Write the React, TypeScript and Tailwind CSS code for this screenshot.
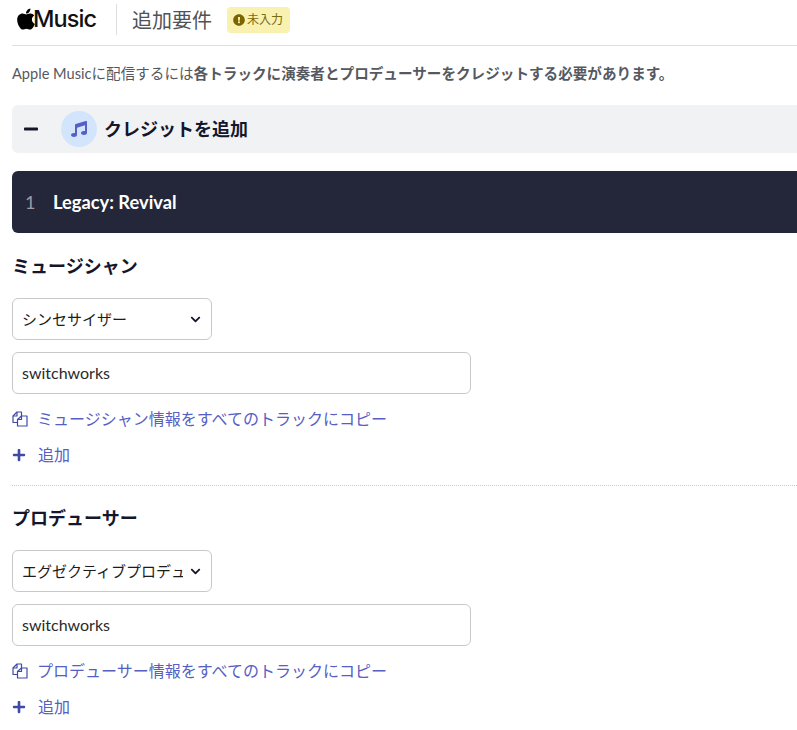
import React from "react";
import { FaApple, FaChevronDown, FaExclamationCircle, FaMinus, FaMusic, FaPlus } from "react-icons/fa";

const CopyIcon = () => (
  <svg width="16" height="16" viewBox="0 0 16 16" fill="none" stroke="#3f4aa8" strokeWidth="1.2" strokeLinejoin="round" className="shrink-0">
    <path d="M5.5 11.5H1V5L5 1H9.5V5" />
    <path d="M5 1V5H1" />
    <path d="M5.5 11.5V8.5L9.5 5H15V15H5.5V11.5Z" />
    <path d="M9.5 5V8.5H5.5" />
  </svg>
);

const CreditSection = ({ title, role, name, copyLabel }: { title: string; role: string; name: string; copyLabel: string }) => (
  <section>
    <h3 className="text-[18px] leading-[26px] font-bold text-[#14172b]">{title}</h3>
    <div className="relative mt-[19px] w-[200px]">
      <select defaultValue={role} className="h-[42px] w-full appearance-none rounded-md border border-[#c9c9c9] bg-white pl-[9px] pr-[28px] text-[15px] text-[#1c1c1c]">
        <option>{role}</option>
      </select>
      <FaChevronDown className="pointer-events-none absolute right-[11px] top-[16px] text-[11px] text-[#14172b]" />
    </div>
    <div className="mt-3 flex h-[42px] w-[459px] items-center rounded-md border border-[#c9c9c9] bg-white px-[9px] text-[16px] text-[#2a2a2a]">{name}</div>
    <a className="mt-[13px] flex h-[24px] items-center gap-[9px] text-[16px] text-[#5660c4]">
      <CopyIcon />
      {copyLabel}
    </a>
    <a className="mt-3 flex h-[24px] items-center gap-[12px] text-[16px] text-[#5660c4]">
      <FaPlus className="text-[14px] text-[#3f4aa8]" />
      追加
    </a>
  </section>
);

export default function App() {
  return (
    <div className="h-[730px] overflow-hidden bg-white pl-3 font-['Lato','Noto_Sans_CJK_JP',sans-serif]">
      <header className="flex h-[46px] items-start border-b border-[#dedede]">
        <div className="mt-[4px] flex h-[30px] w-[84px] items-center">
          <FaApple className="ml-[2px] shrink-0 text-[24px] text-black" />
          <span className="-ml-[5px] font-['Inter',sans-serif] text-[23.5px] font-medium tracking-[-0.9px] text-[#111]">Music</span>
        </div>
        <div className="ml-5 mt-1 h-[31px] w-px bg-[#dedede]" />
        <h2 className="ml-[15px] mt-[5px] text-[20px] leading-[30px] text-[#4f5358]">追加要件</h2>
        <span className="ml-[15px] mt-[7px] flex h-[26px] items-center gap-[2px] rounded bg-[#f8f1b0] pl-[6px] pr-[7px] text-[12px] text-[#7a6a10]">
          <FaExclamationCircle className="text-[12px] text-[#7a6500]" />
          未入力
        </span>
      </header>

      <p className="mt-[16px] whitespace-nowrap text-[14.6px] leading-[24px] text-[#55595f]">
        Apple Musicに配信するには<strong className="font-bold">各トラックに演奏者とプロデューサーをクレジットする必要があります。</strong>
      </p>

      <div className="mt-[19px] flex h-[48px] items-center rounded-l-md bg-[#f1f2f4]">
        <FaMinus className="ml-[11px] text-[16px] text-[#14172b]" />
        <span className="ml-[22px] flex h-9 w-9 items-center justify-center rounded-full bg-[#d3e4fd]">
          <FaMusic className="text-[16px] text-[#5660c4]" />
        </span>
        <span className="ml-[7px] text-[18px] font-bold text-[#14172b]">クレジットを追加</span>
      </div>

      <div className="mt-[18px] flex h-[62px] items-center rounded-l-md bg-[#24273a]">
        <span className="ml-[13px] w-[28px] text-[18px] text-[#9a9ca6]">1</span>
        <span className="pt-px text-[18.3px] font-bold text-white">Legacy: Revival</span>
      </div>

      <div className="mt-5">
        <CreditSection title="ミュージシャン" role="シンセサイザー" name="switchworks" copyLabel="ミュージシャン情報をすべてのトラックにコピー" />
      </div>

      <div className="mb-[19px] mt-[18px] border-t border-dotted border-[#c9c9c9]" />

      <CreditSection title="プロデューサー" role="エグゼクティブプロデューサー" name="switchworks" copyLabel="プロデューサー情報をすべてのトラックにコピー" />
    </div>
  );
}
